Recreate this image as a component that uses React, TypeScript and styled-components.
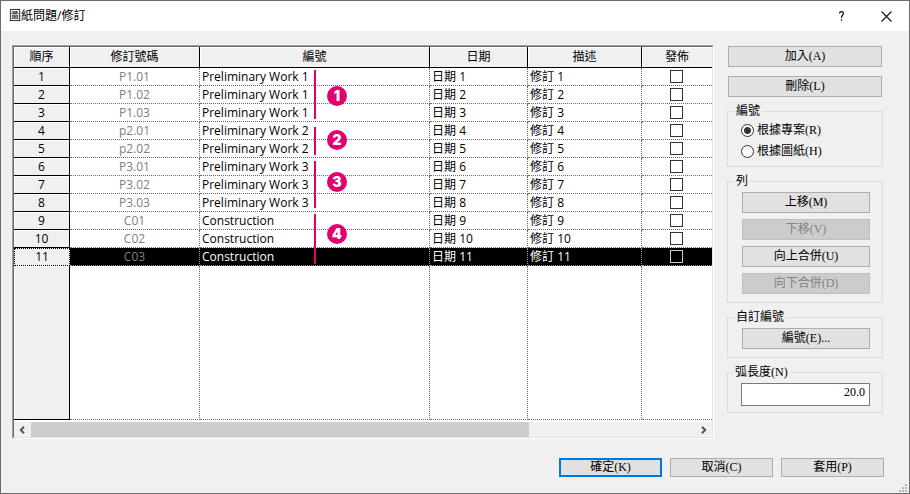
import React, { useState } from 'react';
import styled, { createGlobalStyle, css } from 'styled-components';

const GlobalStyle = createGlobalStyle`
  *, *::before, *::after { box-sizing: border-box; }
  body { margin: 0; background: #f0f0f0; }
  button, input { font: inherit; color: inherit; margin: 0; }
`;

const gridFont = `"Open Sans", "Noto Sans CJK TC", sans-serif`;
const dialogFont = `"Liberation Serif", "Noto Sans CJK TC", serif`;

const Dialog = styled.main`
  position: relative;
  display: flex;
  flex-direction: column;
  min-height: 100vh;
  border: 1px solid #6b6b6b;
  background: #f0f0f0;
  color: #000;
  font: 12px/16px ${dialogFont};
`;

const TitleBar = styled.header`
  display: flex;
  align-items: center;
  height: 30px;
  padding-left: 8px;
  background: #fff;
  font-family: ${gridFont};
`;

const Title = styled.h1`
  flex: 1;
  margin: 0;
  font-size: 12px;
  font-weight: 400;
`;

const TitleButton = styled.button`
  display: flex;
  align-items: center;
  justify-content: center;
  width: 45px;
  height: 30px;
  padding: 0;
  border: 0;
  background: transparent;
`;

const Body = styled.div`
  display: flex;
  align-items: flex-start;
  gap: 13px;
  padding: 14px 26px 0 11px;
`;

const GridBevel = styled.div`
  flex: 1;
  min-width: 0;
  border: 1px solid;
  border-color: #a0a0a0 #fff #fff #a0a0a0;
`;

const GridInner = styled.section`
  position: relative;
  border: 1px solid;
  border-color: #696969 #e3e3e3 #e3e3e3 #696969;
  background: #fff;
`;

const Table = styled.table`
  width: 100%;
  table-layout: fixed;
  border-collapse: separate;
  border-spacing: 0;
  font: 12px/16px ${gridFont};
`;

const Col = styled.col<{ $w?: number }>`
  width: ${p => (p.$w ? `${p.$w}px` : 'auto')};
`;

const HeadCell = styled.th`
  height: 21px;
  padding: 0;
  border-right: 1px solid #000;
  border-bottom: 1px solid #000;
  background: #f0f0f0;
  box-shadow: inset 1px 1px #fff;
  font-weight: 400;
  &:last-child { border-right: 0; }
`;

const RowHead = styled.th<{ $focus?: boolean }>`
  height: 18px;
  padding: 0;
  border-right: 1px solid #000;
  border-bottom: 1px solid #000;
  background: #f0f0f0;
  box-shadow: inset 1px 1px #fff;
  font-weight: 400;
  line-height: 16px;
  ${p => p.$focus && css`
    border: 1px dotted #000;
    box-shadow: none;
    line-height: 14px;
  `}
`;

const Cell = styled.td<{ $align?: string; $muted?: boolean; $on?: boolean }>`
  height: 18px;
  padding: 0 2px;
  overflow: hidden;
  border: 0 dotted ${p => (p.$on ? '#999' : '#6b6b6b')};
  border-right-width: 1px;
  border-bottom-width: 1px;
  background: ${p => (p.$on ? '#000' : '#fff')};
  color: ${p => (p.$muted ? '#808080' : p.$on ? '#fff' : '#000')};
  text-align: ${p => p.$align || 'left'};
  white-space: nowrap;
  &:last-child { border-right-width: 0; }
`;

const TickCell = styled(Cell)`
  padding: 0 3px 0 2px;
`;

const Filler = styled.tr`
  height: 154px;
`;

const Tick = styled.input<{ $on?: boolean }>`
  appearance: none;
  display: block;
  width: 13px;
  height: 13px;
  margin: 0 auto;
  border: 1px solid ${p => (p.$on ? '#ccc' : '#333')};
  background: ${p => (p.$on ? '#000' : '#fff')};
  &:checked { box-shadow: inset 0 0 0 2px ${p => (p.$on ? '#000' : '#fff')}; background: #333; }
`;

const ScrollBar = styled.div`
  display: flex;
  height: 15px;
  margin-top: 2px;
  background: #f0f0f0;
`;

const ScrollArrow = styled.button`
  display: flex;
  align-items: center;
  justify-content: center;
  width: 17px;
  padding: 0;
  border: 0;
  background: transparent;
`;

const Track = styled.div`
  flex: 1;
`;

const Thumb = styled.div`
  width: 75%;
  height: 100%;
  background: #cdcdcd;
`;

const Bracket = styled.span<{ $top: number; $height: number }>`
  position: absolute;
  left: 300px;
  top: ${p => p.$top}px;
  width: 2px;
  height: ${p => p.$height}px;
  background: #e2006f;
`;

const Badge = styled.span<{ $top: number }>`
  position: absolute;
  left: 313px;
  top: ${p => p.$top}px;
  width: 20px;
  height: 20px;
  border-radius: 50%;
  background: #e2006f;
  color: #fff;
  font: 900 14px/20px Inter, sans-serif;
  text-align: center;
`;

const Sidebar = styled.aside`
  display: flex;
  flex: 0 0 156px;
  flex-direction: column;
  gap: 8px;
  padding-top: 1px;
`;

const TopActions = styled.div`
  display: flex;
  flex-direction: column;
  gap: 9px;
  padding: 0 1px;
`;

const Button = styled.button<{ $primary?: boolean }>`
  height: 21px;
  padding: 0;
  border: ${p => (p.$primary ? '2px solid #0078d7' : '1px solid #adadad')};
  background: #e1e1e1;
  line-height: 17px;
  &:disabled {
    border-color: #bfbfbf;
    background: #ccc;
    color: #838383;
  }
`;

const Group = styled.fieldset`
  display: flex;
  flex-direction: column;
  gap: 6px;
  min-width: 0;
  margin: 0;
  padding: 5px 13px 7px 14px;
  border: 1px solid #dcdcdc;
`;

const ButtonGroup = styled(Group)`
  padding: 4px 12px 8px 14px;
`;

const FieldGroup = styled(Group)`
  padding: 4px 12px 6px 13px;
`;

const Legend = styled.legend`
  height: 13px;
  margin-left: -8px;
  padding: 0 2px;
  line-height: 13px;
`;

const RadioLabel = styled.label`
  display: flex;
  align-items: center;
  gap: 3px;
  height: 15px;
  margin-left: -1px;
  line-height: 15px;
`;

const Radio = styled.input`
  appearance: none;
  width: 13px;
  height: 13px;
  border: 1px solid #333;
  border-radius: 50%;
  background: #fff;
  &:checked { background: radial-gradient(circle, #333 3px, #fff 4px); }
`;

const NumberField = styled.input`
  width: 100%;
  height: 23px;
  padding: 0 4px 5px;
  border: 1px solid #7a7a7a;
  border-radius: 0;
  background: #fff;
  text-align: right;
`;

const Footer = styled.footer`
  display: flex;
  justify-content: flex-end;
  gap: 8px;
  padding: 19px 25px 16px;
`;

const FooterButton = styled(Button)`
  width: 103px;
  height: 19px;
  line-height: 15px;
`;

const Grip = styled.svg`
  position: absolute;
  right: 1px;
  bottom: 1px;
`;

const rows: [string, string][] = [
  ['P1.01', 'Preliminary Work 1'],
  ['P1.02', 'Preliminary Work 1'],
  ['P1.03', 'Preliminary Work 1'],
  ['p2.01', 'Preliminary Work 2'],
  ['p2.02', 'Preliminary Work 2'],
  ['P3.01', 'Preliminary Work 3'],
  ['P3.02', 'Preliminary Work 3'],
  ['P3.03', 'Preliminary Work 3'],
  ['C01', 'Construction'],
  ['C02', 'Construction'],
  ['C03', 'Construction'],
];

const callouts = [
  { top: 23, height: 49, badge: 39 },
  { top: 80, height: 28, badge: 83 },
  { top: 114, height: 47, badge: 125 },
  { top: 167, height: 50, badge: 177 },
];

const headings = ['順序', '修訂號碼', '編號', '日期', '描述', '發佈'];

function Chevron({ right }: { right?: boolean }) {
  return (
    <svg width="8" height="8" viewBox="0 0 8 8" fill="none" stroke="#555" strokeWidth="2" aria-hidden="true">
      <path d={right ? 'M2 0.8 5.2 4 2 7.2' : 'M5 0.8 1.8 4 5 7.2'} />
    </svg>
  );
}

export default function App() {
  const [mode, setMode] = useState('project');
  return (
    <>
      <GlobalStyle />
      <Dialog>
        <TitleBar>
          <Title>圖紙問題/修訂</Title>
          <TitleButton aria-label="說明">
            <svg width="6" height="10" viewBox="0 0 6 10" fill="none" stroke="#111" strokeWidth="1.3" aria-hidden="true">
              <path d="M0.6 2.6V1.8Q1.2 0.7 2.5 0.7Q4.4 0.7 4.4 2.4Q4.4 3.5 3.4 4.3Q2.5 5 2.5 6.8" />
              <path d="M1.8 9h1.4" />
            </svg>
          </TitleButton>
          <TitleButton aria-label="關閉">
            <svg width="11" height="11" viewBox="0 0 11 11" stroke="#111" strokeWidth="1.1" aria-hidden="true">
              <path d="M0.5 0.5l10 10M10.5 0.5l-10 10" />
            </svg>
          </TitleButton>
        </TitleBar>
        <Body>
          <GridBevel>
            <GridInner>
              <Table>
                <colgroup>
                  <Col $w={56} />
                  <Col $w={130} />
                  <Col />
                  <Col $w={98} />
                  <Col $w={114} />
                  <Col $w={70} />
                </colgroup>
                <thead>
                  <tr>{headings.map(h => <HeadCell key={h} scope="col">{h}</HeadCell>)}</tr>
                </thead>
                <tbody>
                  {rows.map(([code, name], i) => {
                    const n = i + 1;
                    const on = n === rows.length;
                    return (
                      <tr key={code}>
                        <RowHead scope="row" $focus={on}>{n}</RowHead>
                        <Cell $align="center" $muted $on={on}>{code}</Cell>
                        <Cell $on={on}>{name}</Cell>
                        <Cell $on={on}>日期 {n}</Cell>
                        <Cell $on={on}>修訂 {n}</Cell>
                        <TickCell $on={on}><Tick type="checkbox" $on={on} aria-label={`發佈 ${n}`} /></TickCell>
                      </tr>
                    );
                  })}
                  <Filler>
                    <RowHead as="td" />
                    <Cell /><Cell /><Cell /><Cell /><Cell />
                  </Filler>
                </tbody>
              </Table>
              <ScrollBar>
                <ScrollArrow aria-label="向左捲動"><Chevron /></ScrollArrow>
                <Track><Thumb /></Track>
                <ScrollArrow aria-label="向右捲動"><Chevron right /></ScrollArrow>
              </ScrollBar>
              {callouts.map((c, i) => (
                <React.Fragment key={i}>
                  <Bracket $top={c.top} $height={c.height} />
                  <Badge $top={c.badge}>{i + 1}</Badge>
                </React.Fragment>
              ))}
            </GridInner>
          </GridBevel>
          <Sidebar>
            <TopActions>
              <Button>加入(A)</Button>
              <Button>刪除(L)</Button>
            </TopActions>
            <Group>
              <Legend>編號</Legend>
              <RadioLabel>
                <Radio type="radio" name="numbering" checked={mode === 'project'} onChange={() => setMode('project')} />
                根據專案(R)
              </RadioLabel>
              <RadioLabel>
                <Radio type="radio" name="numbering" checked={mode === 'sheet'} onChange={() => setMode('sheet')} />
                根據圖紙(H)
              </RadioLabel>
            </Group>
            <ButtonGroup>
              <Legend>列</Legend>
              <Button>上移(M)</Button>
              <Button disabled>下移(V)</Button>
              <Button>向上合併(U)</Button>
              <Button disabled>向下合併(D)</Button>
            </ButtonGroup>
            <ButtonGroup>
              <Legend>自訂編號</Legend>
              <Button>編號(E)...</Button>
            </ButtonGroup>
            <FieldGroup>
              <Legend><label htmlFor="arc">弧長度(N)</label></Legend>
              <NumberField id="arc" type="text" defaultValue="20.0" />
            </FieldGroup>
          </Sidebar>
        </Body>
        <Footer>
          <FooterButton $primary>確定(K)</FooterButton>
          <FooterButton>取消(C)</FooterButton>
          <FooterButton>套用(P)</FooterButton>
        </Footer>
        <Grip width="9" height="9" viewBox="0 0 9 9" fill="#b8b8b8" aria-hidden="true">
          <path d="M0 7h2v2H0zM3 7h2v2H3zM6 7h2v2H6zM3 4h2v2H3zM6 4h2v2H6zM6 1h2v2H6z" />
        </Grip>
      </Dialog>
    </>
  );
}
